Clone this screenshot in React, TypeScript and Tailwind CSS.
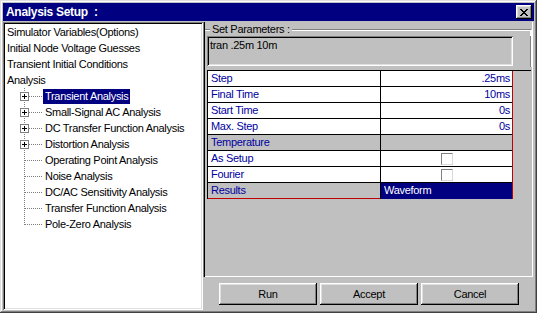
import React from "react";

const FONT = "font-['Liberation_Sans',Arial,sans-serif]";

const xSpans: [number, number, number][] = [
  [0, 0, 2], [6, 0, 2],
  [1, 1, 2], [5, 1, 2],
  [2, 2, 4],
  [3, 3, 2],
  [2, 4, 4],
  [1, 5, 2], [5, 5, 2],
  [0, 6, 2], [6, 6, 2],
];

function CloseGlyph() {
  return (
    <svg width="8" height="7" viewBox="0 0 8 7" shapeRendering="crispEdges">
      {xSpans.map(([x, y, w], i) => (
        <rect key={i} x={x} y={y} width={w} height={1} fill="#000" />
      ))}
    </svg>
  );
}

type Child = { t: string; plus?: boolean; sel?: boolean; last?: boolean };

const children: Child[] = [
  { t: "Transient Analysis", plus: true, sel: true },
  { t: "Small-Signal AC Analysis", plus: true },
  { t: "DC Transfer Function Analysis", plus: true },
  { t: "Distortion Analysis", plus: true },
  { t: "Operating Point Analysis" },
  { t: "Noise Analysis" },
  { t: "DC/AC Sensitivity Analysis" },
  { t: "Transfer Function Analysis" },
  { t: "Pole-Zero Analysis", last: true },
];

function Connector({ plus, last }: { plus?: boolean; last?: boolean }) {
  return (
    <svg width="38" height="16" viewBox="0 0 38 16" shapeRendering="crispEdges" className="shrink-0">
      <line x1="19.5" y1="0" x2="19.5" y2={last ? 9 : 16} stroke="#808080" strokeWidth="1" strokeDasharray="1 1" />
      <line x1="20" y1="8.5" x2="38" y2="8.5" stroke="#808080" strokeWidth="1" strokeDasharray="1 1" />
      {plus && (
        <g>
          <rect x="15.5" y="4.5" width="8" height="8" fill="#fff" stroke="#808080" strokeWidth="1" />
          <line x1="17" y1="8.5" x2="22" y2="8.5" stroke="#000" strokeWidth="1" />
          <line x1="19.5" y1="6" x2="19.5" y2="11" stroke="#000" strokeWidth="1" />
        </g>
      )}
    </svg>
  );
}

type Kind = "text" | "gray" | "check" | "results";
type Row = { label: string; value?: string; kind: Kind };

const rows: Row[] = [
  { label: "Step", value: ".25ms", kind: "text" },
  { label: "Final Time", value: "10ms", kind: "text" },
  { label: "Start Time", value: "0s", kind: "text" },
  { label: "Max. Step", value: "0s", kind: "text" },
  { label: "Temperature", kind: "gray" },
  { label: "As Setup", kind: "check" },
  { label: "Fourier", kind: "check" },
  { label: "Results", value: "Waveform", kind: "results" },
];

const leftCls: Record<Kind, string> = {
  text: "bg-white border-b border-b-[#000]",
  check: "bg-white border-b border-b-[#000]",
  gray: "bg-[#c0c0c0] border-b border-b-[#000]",
  results: "bg-[#c0c0c0] border-b border-b-[#c00000]",
};

const rightCls: Record<Kind, string> = {
  text: "bg-white text-[#0000a0] justify-end pr-[2px] border-b border-b-[#000]",
  check: "bg-white justify-center items-center border-b border-b-[#000]",
  gray: "bg-[#c0c0c0] border-b border-b-[#000]",
  results: "bg-[#000080] text-white pl-[3px]",
};

function Button({ children }: { children: React.ReactNode }) {
  return (
    <div className="w-[98px] h-[22px] flex items-center justify-center bg-[#c0c0c0] text-black shadow-[inset_-1px_-1px_0_0_#000,inset_1px_1px_0_0_#fff,inset_-2px_-2px_0_0_#808080,inset_2px_2px_0_0_#dfdfdf]">
      {children}
    </div>
  );
}

export default function App() {
  return (
    <div
      className={`w-[537px] h-[313px] bg-[#c0c0c0] p-[3px] flex flex-col text-[11px] tracking-[-0.3px] ${FONT} shadow-[inset_-1px_-1px_0_0_#404040,inset_1px_1px_0_0_#dfdfdf,inset_-2px_-2px_0_0_#808080,inset_2px_2px_0_0_#fff]`}
    >
      {/* Title bar */}
      <div className="h-[18px] bg-[#000080] flex items-center justify-between pl-[3px] pr-[2px] shrink-0">
        <span className="text-white font-bold text-[12px] leading-[18px]">Analysis Setup&nbsp;&nbsp;:</span>
        <div className="w-[16px] h-[14px] bg-[#c0c0c0] flex items-center justify-center shadow-[inset_-1px_-1px_0_0_#000,inset_1px_1px_0_0_#fff,inset_-2px_-2px_0_0_#808080,inset_2px_2px_0_0_#dfdfdf]">
          <CloseGlyph />
        </div>
      </div>

      {/* Body */}
      <div className="flex flex-1 mt-[1px] min-h-0">
        {/* Tree */}
        <div className="w-[200px] bg-white p-[2px] shrink-0 shadow-[inset_1px_1px_0_0_#808080,inset_-1px_-1px_0_0_#fff,inset_2px_2px_0_0_#000,inset_-2px_-2px_0_0_#dfdfdf]">
          <div className="flex flex-col text-black">
            {["Simulator Variables(Options)", "Initial Node Voltage Guesses", "Transient Initial Conditions", "Analysis"].map((t) => (
              <div key={t} className="h-[16px] leading-[16px] pl-[2px] whitespace-nowrap">
                {t}
              </div>
            ))}
            {children.map((c) => (
              <div key={c.t} className="h-[16px] flex whitespace-nowrap">
                <Connector plus={c.plus} last={c.last} />
                <span
                  className={`h-[15px] leading-[15px] mt-[1px] px-[2px] ${
                    c.sel ? "bg-[#000080] text-white" : "text-black"
                  }`}
                >
                  {c.t}
                </span>
              </div>
            ))}
          </div>
        </div>

        {/* Right side */}
        <div className="flex-1 flex flex-col">
          <div className="w-[330px] h-[255px] pl-[2px] pr-[1px] flex flex-col shadow-[inset_1px_0_0_0_#808080,inset_2px_0_0_0_#000,inset_-1px_-1px_0_0_#fff]">
            {/* Group box */}
            <div className="flex flex-col mt-[1px]">
              <div className="flex h-[13px]">
                <div className="w-[5px] h-[2px] mt-[6px] border-t border-t-[#808080] border-b border-b-white" />
                <span className="px-[2px] leading-[13px] text-black">Set Parameters :</span>
                <div className="flex-1 mt-[6px] border-t border-t-[#808080] border-r border-r-white shadow-[inset_-1px_1px_0_0_#fff,inset_-1px_0_0_0_#808080]" />
              </div>
              <div className="flex h-[31px] border-r border-r-white shadow-[inset_-1px_0_0_0_#808080]">
                <div className="ml-[2px] w-[306px] h-[30px] bg-[#c0c0c0] px-[3px] pt-[2px] leading-[15px] text-black shadow-[inset_1px_1px_0_0_#808080,inset_-1px_-1px_0_0_#fff,inset_2px_2px_0_0_#000,inset_-2px_-2px_0_0_#dfdfdf]">
                  tran .25m 10m
                </div>
              </div>
            </div>

            {/* Table */}
            <div className="mt-[3px] ml-[2px] mr-[1px] border-t border-t-[#000] flex">
              <div className="w-[1px] h-[128px] bg-[#000]" />
              <div className="flex flex-col">
                {rows.map((r, i) => (
                  <div key={i} className={`w-[172px] h-[16px] pl-[3px] leading-[15px] text-[#0000a0] ${leftCls[r.kind]}`}>
                    {r.label}
                  </div>
                ))}
              </div>
              <div className="w-[1px] h-[128px] bg-[#000]" />
              <div className="flex flex-col">
                {rows.map((r, i) => (
                  <div key={i} className={`w-[131px] h-[16px] leading-[15px] flex ${rightCls[r.kind]}`}>
                    {r.kind === "check" ? (
                      <div className="w-[12px] h-[12px] bg-white border border-t-[#808080] border-l-[#808080] border-r-[#d8d8d8] border-b-[#d8d8d8]" />
                    ) : (
                      r.value
                    )}
                  </div>
                ))}
              </div>
              <div className="w-[1px] h-[128px] bg-[#c00000]" />
            </div>
          </div>

          {/* Buttons */}
          <div className="flex gap-[3px] pl-[16px] pt-[6px]">
            <Button>Run</Button>
            <Button>Accept</Button>
            <Button>Cancel</Button>
          </div>
        </div>
      </div>
    </div>
  );
}
